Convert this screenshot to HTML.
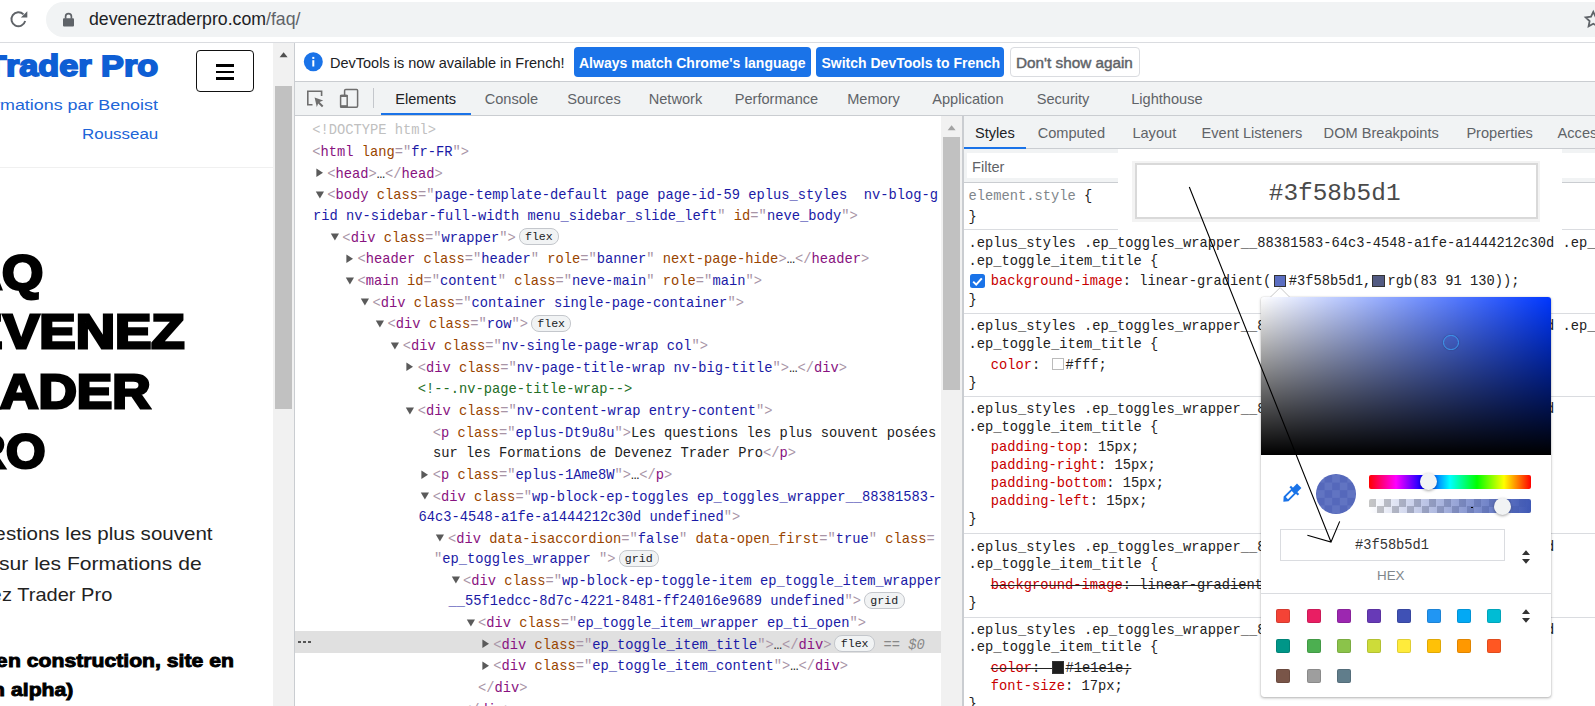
<!DOCTYPE html><html><head><meta charset="utf-8"><style>html,body{margin:0;padding:0;width:1595px;height:706px;overflow:hidden;background:#fff;position:relative}body>div,body>svg{box-sizing:content-box}</style></head><body><div style="position:absolute;left:0px;top:0px;width:1595px;height:42px;background:#fff"></div>
<div style="position:absolute;left:0px;top:42px;width:1595px;height:1px;background:#dadce0"></div>
<div style="position:absolute;left:46px;top:2px;width:1600px;height:35px;background:#f1f3f4;border-radius:17.5px"></div>
<svg style="position:absolute;left:0;top:0" width="40" height="40" viewBox="0 0 40 40">
<path d="M23.5 14.4 A7 7 0 1 0 25.2 21.1" fill="none" stroke="#5f6368" stroke-width="1.9"/>
<path d="M20.9 17.4 L27.3 17.4 L27.3 11.2 Z" fill="#5f6368"/>
</svg>
<svg style="position:absolute;left:62px;top:12px" width="13" height="16" viewBox="0 0 13 16">
<path d="M3.6 6.8 V4.6 A2.9 2.9 0 0 1 9.4 4.6 V6.8" fill="none" stroke="#5f6368" stroke-width="1.7"/>
<rect x="1" y="6.2" width="11" height="8.4" rx="1" fill="#5f6368"/>
</svg>
<div style="position:absolute;left:89px;top:4.47px;line-height:30px;font-family:'Liberation Sans', sans-serif;font-size:17.7px;color:#202124;font-weight:400;white-space:pre;"><span style="color:#202124">deveneztraderpro.com</span><span style="color:#5f6368">/faq/</span></div>
<svg style="position:absolute;left:0;top:0" width="1595" height="42" viewBox="0 0 1595 42"><path d="M1593.30 11.90 L1595.59 16.74 L1600.91 17.43 L1597.01 21.11 L1598.00 26.37 L1593.30 23.80 L1588.60 26.37 L1589.59 21.11 L1585.69 17.43 L1591.01 16.74 Z" fill="none" stroke="#5f6368" stroke-width="1.8" stroke-linejoin="miter"/></svg>
<div style="position:absolute;left:0px;top:43px;width:273px;height:663px;background:#fff"></div>
<div style="position:absolute;left:5.959848484848484px;top:50.51px;line-height:30px;font-family:'Liberation Sans', sans-serif;font-size:30px;color:#0e5ed4;font-weight:700;white-space:pre;transform:scaleX(1.1402);transform-origin:0 0;-webkit-text-stroke:1.8px #0e5ed4;">rader Pro</div>
<div style="position:absolute;right:1589.0401515151516px;top:50.51px;line-height:30px;font-family:'Liberation Sans', sans-serif;font-size:30px;color:#0e5ed4;font-weight:700;white-space:pre;transform:scaleX(1.1402);transform-origin:100% 0;-webkit-text-stroke:1.8px #0e5ed4;">T</div>
<div style="position:absolute;left:-0.3529411764705881px;top:89.53px;line-height:30px;font-family:'Liberation Sans', sans-serif;font-size:15.5px;color:#2065d8;font-weight:400;white-space:pre;transform:scaleX(1.1529);transform-origin:0 0;">mations par Benoist</div>
<div style="position:absolute;right:1595.3529411764705px;top:89.53px;line-height:30px;font-family:'Liberation Sans', sans-serif;font-size:15.5px;color:#2065d8;font-weight:400;white-space:pre;transform:scaleX(1.1529);transform-origin:100% 0;">for</div>
<div style="position:absolute;left:82.20735294117647px;top:118.83px;line-height:30px;font-family:'Liberation Sans', sans-serif;font-size:15.5px;color:#2065d8;font-weight:400;white-space:pre;transform:scaleX(1.0926);transform-origin:0 0;">Rousseau</div>
<div style="position:absolute;left:2.1px;top:257.87px;line-height:30px;font-family:'Liberation Sans', sans-serif;font-size:48px;color:#000;font-weight:700;white-space:pre;transform:scaleX(1.1027);transform-origin:0 0;-webkit-text-stroke:2.8px #000;">Q</div>
<div style="position:absolute;right:1592.9px;top:257.87px;line-height:30px;font-family:'Liberation Sans', sans-serif;font-size:48px;color:#000;font-weight:700;white-space:pre;transform:scaleX(1.1027);transform-origin:100% 0;-webkit-text-stroke:2.8px #000;">FA</div>
<div style="position:absolute;left:2.8347826086956522px;top:317.37px;line-height:30px;font-family:'Liberation Sans', sans-serif;font-size:48px;color:#000;font-weight:700;white-space:pre;transform:scaleX(1.1348);transform-origin:0 0;-webkit-text-stroke:2.8px #000;">VENEZ</div>
<div style="position:absolute;right:1592.1652173913044px;top:317.37px;line-height:30px;font-family:'Liberation Sans', sans-serif;font-size:48px;color:#000;font-weight:700;white-space:pre;transform:scaleX(1.1348);transform-origin:100% 0;-webkit-text-stroke:2.8px #000;">DE</div>
<div style="position:absolute;left:-0.3927536231884057px;top:377.17px;line-height:30px;font-family:'Liberation Sans', sans-serif;font-size:48px;color:#000;font-weight:700;white-space:pre;transform:scaleX(1.1072);transform-origin:0 0;-webkit-text-stroke:2.8px #000;">ADER</div>
<div style="position:absolute;right:1595.3927536231884px;top:377.17px;line-height:30px;font-family:'Liberation Sans', sans-serif;font-size:48px;color:#000;font-weight:700;white-space:pre;transform:scaleX(1.1072);transform-origin:100% 0;-webkit-text-stroke:2.8px #000;">TR</div>
<div style="position:absolute;left:5.5px;top:437.37px;line-height:30px;font-family:'Liberation Sans', sans-serif;font-size:48px;color:#000;font-weight:700;white-space:pre;transform:scaleX(1.0568);transform-origin:0 0;-webkit-text-stroke:2.8px #000;">O</div>
<div style="position:absolute;right:1589.5px;top:437.37px;line-height:30px;font-family:'Liberation Sans', sans-serif;font-size:48px;color:#000;font-weight:700;white-space:pre;transform:scaleX(1.0568);transform-origin:100% 0;-webkit-text-stroke:2.8px #000;">PR</div>
<div style="position:absolute;left:5.871428571428572px;top:519.19px;line-height:30px;font-family:'Liberation Sans', sans-serif;font-size:18.2px;color:#222;font-weight:400;white-space:pre;transform:scaleX(1.1286);transform-origin:0 0;">stions les plus souvent</div>
<div style="position:absolute;right:1589.1285714285714px;top:519.19px;line-height:30px;font-family:'Liberation Sans', sans-serif;font-size:18.2px;color:#222;font-weight:400;white-space:pre;transform:scaleX(1.1286);transform-origin:100% 0;">Les que</div>
<div style="position:absolute;left:-0.8589595375722543px;top:549.19px;line-height:30px;font-family:'Liberation Sans', sans-serif;font-size:18.2px;color:#222;font-weight:400;white-space:pre;transform:scaleX(1.1590);transform-origin:0 0;">sur les Formations de</div>
<div style="position:absolute;right:1595.8589595375722px;top:549.19px;line-height:30px;font-family:'Liberation Sans', sans-serif;font-size:18.2px;color:#222;font-weight:400;white-space:pre;transform:scaleX(1.1590);transform-origin:100% 0;">posées </div>
<div style="position:absolute;left:2.0979797979797983px;top:579.69px;line-height:30px;font-family:'Liberation Sans', sans-serif;font-size:18.2px;color:#222;font-weight:400;white-space:pre;transform:scaleX(1.1020);transform-origin:0 0;">z Trader Pro</div>
<div style="position:absolute;right:1592.9020202020201px;top:579.69px;line-height:30px;font-family:'Liberation Sans', sans-serif;font-size:18.2px;color:#222;font-weight:400;white-space:pre;transform:scaleX(1.1020);transform-origin:100% 0;">Devene</div>
<div style="position:absolute;left:7.75561224489796px;top:646.09px;line-height:30px;font-family:'Liberation Sans', sans-serif;font-size:18.5px;color:#000;font-weight:700;white-space:pre;transform:scaleX(1.1444);transform-origin:0 0;-webkit-text-stroke:0.9px #000;">n construction, site en</div>
<div style="position:absolute;right:1587.244387755102px;top:646.09px;line-height:30px;font-family:'Liberation Sans', sans-serif;font-size:18.5px;color:#000;font-weight:700;white-space:pre;transform:scaleX(1.1444);transform-origin:100% 0;-webkit-text-stroke:0.9px #000;">(Site e</div>
<div style="position:absolute;left:11.2px;top:675.09px;line-height:30px;font-family:'Liberation Sans', sans-serif;font-size:18.5px;color:#000;font-weight:700;white-space:pre;transform:scaleX(1.1426);transform-origin:0 0;-webkit-text-stroke:0.9px #000;">alpha)</div>
<div style="position:absolute;right:1583.8px;top:675.09px;line-height:30px;font-family:'Liberation Sans', sans-serif;font-size:18.5px;color:#000;font-weight:700;white-space:pre;transform:scaleX(1.1426);transform-origin:100% 0;-webkit-text-stroke:0.9px #000;">en </div>
<div style="position:absolute;left:196px;top:50px;width:56px;height:40px;border:1.3px solid #111;border-radius:4px;background:#fff"></div>
<div style="position:absolute;left:216px;top:64px;width:18px;height:2.8px;background:#000"></div>
<div style="position:absolute;left:216px;top:70.5px;width:18px;height:2.8px;background:#000"></div>
<div style="position:absolute;left:216px;top:77px;width:18px;height:2.8px;background:#000"></div>
<div style="position:absolute;left:0px;top:166.5px;width:273px;height:1px;background:#f0f0f0"></div>
<div style="position:absolute;left:273px;top:43px;width:21px;height:663px;background:#f1f1f1"></div>
<svg style="position:absolute;left:278px;top:50px" width="12" height="9" viewBox="0 0 12 9">
<path d="M1.6 7.2 L5.6 2.2 L9.6 7.2 Z" fill="#505050"/></svg>
<div style="position:absolute;left:275px;top:86px;width:17px;height:323px;background:#c1c1c1"></div>
<div style="position:absolute;left:294px;top:43px;width:1px;height:663px;background:#cacdd1"></div>
<div style="position:absolute;left:295px;top:43px;width:1300px;height:38px;background:#fff"></div>
<div style="position:absolute;left:295px;top:81px;width:1300px;height:1px;background:#cacdd1"></div>
<svg style="position:absolute;left:303px;top:52px" width="20" height="20" viewBox="0 0 20 20">
<circle cx="10.3" cy="9.7" r="9.5" fill="#1a73e8"/>
<rect x="9.3" y="8.2" width="2" height="6.3" fill="#fff"/>
<rect x="9.3" y="4.9" width="2" height="2" fill="#fff"/></svg>
<div style="position:absolute;left:330px;top:47.78px;line-height:30px;font-family:'Liberation Sans', sans-serif;font-size:14.5px;color:#202124;font-weight:400;white-space:pre;">DevTools is now available in French!</div>
<div style="position:absolute;left:574px;top:47px;width:237px;height:30px;background:#1a73e8;border-radius:4px"></div>
<div style="position:absolute;left:579px;top:47.65px;line-height:30px;font-family:'Liberation Sans', sans-serif;font-size:14px;color:#fff;font-weight:700;white-space:pre;">Always match Chrome&#x27;s language</div>
<div style="position:absolute;left:816px;top:47px;width:188px;height:30px;background:#1a73e8;border-radius:4px"></div>
<div style="position:absolute;left:821.5px;top:47.65px;line-height:30px;font-family:'Liberation Sans', sans-serif;font-size:14px;color:#fff;font-weight:700;white-space:pre;">Switch DevTools to French</div>
<div style="position:absolute;left:1009.5px;top:47px;width:128px;height:28px;background:#fff;border:1px solid #dadce0;border-radius:4px"></div>
<div style="position:absolute;left:1016px;top:47.50px;line-height:30px;font-family:'Liberation Sans', sans-serif;font-size:15.3px;color:#5f6368;font-weight:400;white-space:pre;-webkit-text-stroke:0.45px #5f6368">Don&#x27;t show again</div>
<div style="position:absolute;left:295px;top:82px;width:1300px;height:33px;background:#f1f3f4"></div>
<div style="position:absolute;left:295px;top:115px;width:1300px;height:1px;background:#cacdd1"></div>
<svg style="position:absolute;left:305px;top:88px" width="22" height="22" viewBox="0 0 22 22">
<path d="M7.5 16.8 H2.8 V3.2 H16.6 V8" fill="none" stroke="#6e6e6e" stroke-width="1.6"/>
<path d="M9.6 9.6 L18.2 12.6 L14.6 14 L18.4 17.8 L17 19.2 L13.2 15.4 L11.8 19 Z" fill="#6e6e6e"/></svg>
<svg style="position:absolute;left:337px;top:86px" width="24" height="24" viewBox="0 0 24 24">
<path d="M7.6 9 V4.6 Q7.6 3.4 8.8 3.4 H19.6 Q20.6 3.4 20.6 4.6 V20 Q20.6 21.2 19.4 21.2 H9.5" fill="none" stroke="#6e6e6e" stroke-width="1.5"/>
<rect x="3.6" y="9.4" width="6.6" height="11.2" rx="1" fill="none" stroke="#6e6e6e" stroke-width="1.5"/>
<rect x="2.9" y="19.3" width="8" height="2.6" rx="0.8" fill="#6e6e6e"/>
<rect x="2.9" y="8.7" width="8" height="2.4" rx="0.8" fill="#6e6e6e"/></svg>
<div style="position:absolute;left:372.5px;top:88px;width:1.2px;height:20px;background:#c4c7cc"></div>
<div style="position:absolute;left:395.2px;top:83.94px;line-height:30px;font-family:'Liberation Sans', sans-serif;font-size:14.6px;color:#202124;font-weight:400;white-space:pre;">Elements</div>
<div style="position:absolute;left:484.7px;top:83.94px;line-height:30px;font-family:'Liberation Sans', sans-serif;font-size:14.6px;color:#5f6368;font-weight:400;white-space:pre;">Console</div>
<div style="position:absolute;left:567.2px;top:83.94px;line-height:30px;font-family:'Liberation Sans', sans-serif;font-size:14.6px;color:#5f6368;font-weight:400;white-space:pre;">Sources</div>
<div style="position:absolute;left:648.7px;top:83.94px;line-height:30px;font-family:'Liberation Sans', sans-serif;font-size:14.6px;color:#5f6368;font-weight:400;white-space:pre;">Network</div>
<div style="position:absolute;left:734.7px;top:83.94px;line-height:30px;font-family:'Liberation Sans', sans-serif;font-size:14.6px;color:#5f6368;font-weight:400;white-space:pre;">Performance</div>
<div style="position:absolute;left:847.2px;top:83.94px;line-height:30px;font-family:'Liberation Sans', sans-serif;font-size:14.6px;color:#5f6368;font-weight:400;white-space:pre;">Memory</div>
<div style="position:absolute;left:932.2px;top:83.94px;line-height:30px;font-family:'Liberation Sans', sans-serif;font-size:14.6px;color:#5f6368;font-weight:400;white-space:pre;">Application</div>
<div style="position:absolute;left:1036.7px;top:83.94px;line-height:30px;font-family:'Liberation Sans', sans-serif;font-size:14.6px;color:#5f6368;font-weight:400;white-space:pre;">Security</div>
<div style="position:absolute;left:1131.2px;top:83.94px;line-height:30px;font-family:'Liberation Sans', sans-serif;font-size:14.6px;color:#5f6368;font-weight:400;white-space:pre;">Lighthouse</div>
<div style="position:absolute;left:381px;top:113px;width:89.5px;height:2px;background:#1a73e8"></div>
<div style="position:absolute;left:295px;top:116px;width:646px;height:590px;background:#fff"></div>
<div style="position:absolute;left:941px;top:116px;width:21px;height:590px;background:#f1f1f1"></div>
<svg style="position:absolute;left:946px;top:123px" width="12" height="9" viewBox="0 0 12 9">
<path d="M1.6 7.2 L5.6 2.2 L9.6 7.2 Z" fill="#a3a3a3"/></svg>
<div style="position:absolute;left:943px;top:137px;width:17px;height:253px;background:#c1c1c1"></div>
<div style="position:absolute;left:962px;top:116px;width:1.5px;height:590px;background:#cacdd1"></div>
<div style="position:absolute;left:312.2px;top:116.34px;line-height:30px;font-family:'Liberation Mono', monospace;font-size:13.75px;color:#202124;font-weight:400;white-space:pre;"><span style="color:#c0c0c0">&lt;!DOCTYPE html&gt;</span></div>
<div style="position:absolute;left:312.2px;top:138.04px;line-height:30px;font-family:'Liberation Mono', monospace;font-size:13.75px;color:#202124;font-weight:400;white-space:pre;"><span style="color:#a894a6">&lt;</span><span style="color:#881280">html </span><span style="color:#994500">lang</span><span style="color:#a894a6">=&quot;</span><span style="color:#1a1aa6">fr-FR</span><span style="color:#a894a6">&quot;&gt;</span></div>
<svg style="position:absolute;left:315.8px;top:168.4px" width="8" height="10" viewBox="0 0 8 10"><path d="M0.4 0.6 L7 4.8 L0.4 9 Z" fill="#5a5a5a"/></svg>
<div style="position:absolute;left:327.28px;top:159.74px;line-height:30px;font-family:'Liberation Mono', monospace;font-size:13.75px;color:#202124;font-weight:400;white-space:pre;"><span style="color:#a894a6">&lt;</span><span style="color:#881280">head</span><span style="color:#a894a6">&gt;</span><span style="color:#222">…</span><span style="color:#a894a6">&lt;/</span><span style="color:#881280">head</span><span style="color:#a894a6">&gt;</span></div>
<svg style="position:absolute;left:314.8px;top:191.1px" width="10" height="8" viewBox="0 0 10 8"><path d="M0.8 0.6 L9 0.6 L4.9 7.4 Z" fill="#5a5a5a"/></svg>
<div style="position:absolute;left:327.28px;top:181.44px;line-height:30px;font-family:'Liberation Mono', monospace;font-size:13.75px;color:#202124;font-weight:400;white-space:pre;"><span style="color:#a894a6">&lt;</span><span style="color:#881280">body </span><span style="color:#994500">class</span><span style="color:#a894a6">=&quot;</span><span style="color:#1a1aa6">page-template-default page page-id-59 eplus_styles  nv-blog-g</span></div>
<div style="position:absolute;left:313px;top:201.82px;line-height:30px;font-family:'Liberation Mono', monospace;font-size:13.75px;color:#202124;font-weight:400;white-space:pre;"><span style="color:#1a1aa6">rid nv-sidebar-full-width menu_sidebar_slide_left</span><span style="color:#a894a6">&quot;</span><span style="color:#994500"> id</span><span style="color:#a894a6">=&quot;</span><span style="color:#1a1aa6">neve_body</span><span style="color:#a894a6">&quot;&gt;</span></div>
<svg style="position:absolute;left:329.9px;top:233.2px" width="10" height="8" viewBox="0 0 10 8"><path d="M0.8 0.6 L9 0.6 L4.9 7.4 Z" fill="#5a5a5a"/></svg>
<div style="position:absolute;left:342.36px;top:223.52px;line-height:30px;font-family:'Liberation Mono', monospace;font-size:13.75px;color:#202124;font-weight:400;white-space:pre;"><span style="color:#a894a6">&lt;</span><span style="color:#881280">div </span><span style="color:#994500">class</span><span style="color:#a894a6">=&quot;</span><span style="color:#1a1aa6">wrapper</span><span style="color:#a894a6">&quot;&gt;</span></div>
<div style="position:absolute;left:518.6px;top:228.4px;width:38.5px;height:15px;border:1px solid #c4c7cc;border-radius:8px;background:#f1f3f4;font-family:'Liberation Mono', monospace;font-size:11.6px;line-height:15px;text-align:center;color:#202124">flex</div>
<svg style="position:absolute;left:345.9px;top:253.9px" width="8" height="10" viewBox="0 0 8 10"><path d="M0.4 0.6 L7 4.8 L0.4 9 Z" fill="#5a5a5a"/></svg>
<div style="position:absolute;left:357.44px;top:245.22px;line-height:30px;font-family:'Liberation Mono', monospace;font-size:13.75px;color:#202124;font-weight:400;white-space:pre;"><span style="color:#a894a6">&lt;</span><span style="color:#881280">header </span><span style="color:#994500">class</span><span style="color:#a894a6">=&quot;</span><span style="color:#1a1aa6">header</span><span style="color:#a894a6">&quot;</span><span style="color:#994500"> role</span><span style="color:#a894a6">=&quot;</span><span style="color:#1a1aa6">banner</span><span style="color:#a894a6">&quot;</span><span style="color:#994500"> next-page-hide</span><span style="color:#a894a6">&gt;</span><span style="color:#222">…</span><span style="color:#a894a6">&lt;/</span><span style="color:#881280">header</span><span style="color:#a894a6">&gt;</span></div>
<svg style="position:absolute;left:344.9px;top:276.6px" width="10" height="8" viewBox="0 0 10 8"><path d="M0.8 0.6 L9 0.6 L4.9 7.4 Z" fill="#5a5a5a"/></svg>
<div style="position:absolute;left:357.44px;top:266.92px;line-height:30px;font-family:'Liberation Mono', monospace;font-size:13.75px;color:#202124;font-weight:400;white-space:pre;"><span style="color:#a894a6">&lt;</span><span style="color:#881280">main </span><span style="color:#994500">id</span><span style="color:#a894a6">=&quot;</span><span style="color:#1a1aa6">content</span><span style="color:#a894a6">&quot;</span><span style="color:#994500"> class</span><span style="color:#a894a6">=&quot;</span><span style="color:#1a1aa6">neve-main</span><span style="color:#a894a6">&quot;</span><span style="color:#994500"> role</span><span style="color:#a894a6">=&quot;</span><span style="color:#1a1aa6">main</span><span style="color:#a894a6">&quot;&gt;</span></div>
<svg style="position:absolute;left:360.0px;top:298.3px" width="10" height="8" viewBox="0 0 10 8"><path d="M0.8 0.6 L9 0.6 L4.9 7.4 Z" fill="#5a5a5a"/></svg>
<div style="position:absolute;left:372.52px;top:288.62px;line-height:30px;font-family:'Liberation Mono', monospace;font-size:13.75px;color:#202124;font-weight:400;white-space:pre;"><span style="color:#a894a6">&lt;</span><span style="color:#881280">div </span><span style="color:#994500">class</span><span style="color:#a894a6">=&quot;</span><span style="color:#1a1aa6">container single-page-container</span><span style="color:#a894a6">&quot;&gt;</span></div>
<svg style="position:absolute;left:375.1px;top:320.0px" width="10" height="8" viewBox="0 0 10 8"><path d="M0.8 0.6 L9 0.6 L4.9 7.4 Z" fill="#5a5a5a"/></svg>
<div style="position:absolute;left:387.6px;top:310.32px;line-height:30px;font-family:'Liberation Mono', monospace;font-size:13.75px;color:#202124;font-weight:400;white-space:pre;"><span style="color:#a894a6">&lt;</span><span style="color:#881280">div </span><span style="color:#994500">class</span><span style="color:#a894a6">=&quot;</span><span style="color:#1a1aa6">row</span><span style="color:#a894a6">&quot;&gt;</span></div>
<div style="position:absolute;left:530.9px;top:315.2px;width:38.5px;height:15px;border:1px solid #c4c7cc;border-radius:8px;background:#f1f3f4;font-family:'Liberation Mono', monospace;font-size:11.6px;line-height:15px;text-align:center;color:#202124">flex</div>
<svg style="position:absolute;left:390.2px;top:341.7px" width="10" height="8" viewBox="0 0 10 8"><path d="M0.8 0.6 L9 0.6 L4.9 7.4 Z" fill="#5a5a5a"/></svg>
<div style="position:absolute;left:402.68px;top:332.02px;line-height:30px;font-family:'Liberation Mono', monospace;font-size:13.75px;color:#202124;font-weight:400;white-space:pre;"><span style="color:#a894a6">&lt;</span><span style="color:#881280">div </span><span style="color:#994500">class</span><span style="color:#a894a6">=&quot;</span><span style="color:#1a1aa6">nv-single-page-wrap col</span><span style="color:#a894a6">&quot;&gt;</span></div>
<svg style="position:absolute;left:406.3px;top:362.4px" width="8" height="10" viewBox="0 0 8 10"><path d="M0.4 0.6 L7 4.8 L0.4 9 Z" fill="#5a5a5a"/></svg>
<div style="position:absolute;left:417.76px;top:353.72px;line-height:30px;font-family:'Liberation Mono', monospace;font-size:13.75px;color:#202124;font-weight:400;white-space:pre;"><span style="color:#a894a6">&lt;</span><span style="color:#881280">div </span><span style="color:#994500">class</span><span style="color:#a894a6">=&quot;</span><span style="color:#1a1aa6">nv-page-title-wrap nv-big-title</span><span style="color:#a894a6">&quot;&gt;</span><span style="color:#222">…</span><span style="color:#a894a6">&lt;/</span><span style="color:#881280">div</span><span style="color:#a894a6">&gt;</span></div>
<div style="position:absolute;left:417.76px;top:375.42px;line-height:30px;font-family:'Liberation Mono', monospace;font-size:13.75px;color:#202124;font-weight:400;white-space:pre;"><span style="color:#236e25">&lt;!--.nv-page-title-wrap--&gt;</span></div>
<svg style="position:absolute;left:405.3px;top:406.8px" width="10" height="8" viewBox="0 0 10 8"><path d="M0.8 0.6 L9 0.6 L4.9 7.4 Z" fill="#5a5a5a"/></svg>
<div style="position:absolute;left:417.76px;top:397.12px;line-height:30px;font-family:'Liberation Mono', monospace;font-size:13.75px;color:#202124;font-weight:400;white-space:pre;"><span style="color:#a894a6">&lt;</span><span style="color:#881280">div </span><span style="color:#994500">class</span><span style="color:#a894a6">=&quot;</span><span style="color:#1a1aa6">nv-content-wrap entry-content</span><span style="color:#a894a6">&quot;&gt;</span></div>
<div style="position:absolute;left:432.84px;top:418.82px;line-height:30px;font-family:'Liberation Mono', monospace;font-size:13.75px;color:#202124;font-weight:400;white-space:pre;"><span style="color:#a894a6">&lt;</span><span style="color:#881280">p </span><span style="color:#994500">class</span><span style="color:#a894a6">=&quot;</span><span style="color:#1a1aa6">eplus-Dt9u8u</span><span style="color:#a894a6">&quot;&gt;</span><span style="color:#222">Les questions les plus souvent posées</span></div>
<div style="position:absolute;left:433px;top:439.20px;line-height:30px;font-family:'Liberation Mono', monospace;font-size:13.75px;color:#202124;font-weight:400;white-space:pre;"><span style="color:#222">sur les Formations de Devenez Trader Pro</span><span style="color:#a894a6">&lt;/</span><span style="color:#881280">p</span><span style="color:#a894a6">&gt;</span></div>
<svg style="position:absolute;left:421.3px;top:469.6px" width="8" height="10" viewBox="0 0 8 10"><path d="M0.4 0.6 L7 4.8 L0.4 9 Z" fill="#5a5a5a"/></svg>
<div style="position:absolute;left:432.84px;top:460.90px;line-height:30px;font-family:'Liberation Mono', monospace;font-size:13.75px;color:#202124;font-weight:400;white-space:pre;"><span style="color:#a894a6">&lt;</span><span style="color:#881280">p </span><span style="color:#994500">class</span><span style="color:#a894a6">=&quot;</span><span style="color:#1a1aa6">eplus-1Ame8W</span><span style="color:#a894a6">&quot;&gt;</span><span style="color:#222">…</span><span style="color:#a894a6">&lt;/</span><span style="color:#881280">p</span><span style="color:#a894a6">&gt;</span></div>
<svg style="position:absolute;left:420.3px;top:492.3px" width="10" height="8" viewBox="0 0 10 8"><path d="M0.8 0.6 L9 0.6 L4.9 7.4 Z" fill="#5a5a5a"/></svg>
<div style="position:absolute;left:432.84px;top:482.60px;line-height:30px;font-family:'Liberation Mono', monospace;font-size:13.75px;color:#202124;font-weight:400;white-space:pre;"><span style="color:#a894a6">&lt;</span><span style="color:#881280">div </span><span style="color:#994500">class</span><span style="color:#a894a6">=&quot;</span><span style="color:#1a1aa6">wp-block-ep-toggles ep_toggles_wrapper__88381583-</span></div>
<div style="position:absolute;left:418.5px;top:502.98px;line-height:30px;font-family:'Liberation Mono', monospace;font-size:13.75px;color:#202124;font-weight:400;white-space:pre;"><span style="color:#1a1aa6">64c3-4548-a1fe-a1444212c30d undefined</span><span style="color:#a894a6">&quot;&gt;</span></div>
<svg style="position:absolute;left:435.4px;top:534.3px" width="10" height="8" viewBox="0 0 10 8"><path d="M0.8 0.6 L9 0.6 L4.9 7.4 Z" fill="#5a5a5a"/></svg>
<div style="position:absolute;left:447.91999999999996px;top:524.68px;line-height:30px;font-family:'Liberation Mono', monospace;font-size:13.75px;color:#202124;font-weight:400;white-space:pre;"><span style="color:#a894a6">&lt;</span><span style="color:#881280">div </span><span style="color:#994500">data-isaccordion</span><span style="color:#a894a6">=&quot;</span><span style="color:#1a1aa6">false</span><span style="color:#a894a6">&quot;</span><span style="color:#994500"> data-open_first</span><span style="color:#a894a6">=&quot;</span><span style="color:#1a1aa6">true</span><span style="color:#a894a6">&quot;</span><span style="color:#994500"> class</span><span style="color:#a894a6">=</span></div>
<div style="position:absolute;left:434px;top:545.06px;line-height:30px;font-family:'Liberation Mono', monospace;font-size:13.75px;color:#202124;font-weight:400;white-space:pre;"><span style="color:#a894a6">&quot;</span><span style="color:#1a1aa6">ep_toggles_wrapper </span><span style="color:#a894a6">&quot;&gt;</span></div>
<div style="position:absolute;left:618.5px;top:549.9px;width:38.5px;height:15px;border:1px solid #c4c7cc;border-radius:8px;background:#f1f3f4;font-family:'Liberation Mono', monospace;font-size:11.6px;line-height:15px;text-align:center;color:#202124">grid</div>
<svg style="position:absolute;left:450.5px;top:576.4px" width="10" height="8" viewBox="0 0 10 8"><path d="M0.8 0.6 L9 0.6 L4.9 7.4 Z" fill="#5a5a5a"/></svg>
<div style="position:absolute;left:463.0px;top:566.76px;line-height:30px;font-family:'Liberation Mono', monospace;font-size:13.75px;color:#202124;font-weight:400;white-space:pre;"><span style="color:#a894a6">&lt;</span><span style="color:#881280">div </span><span style="color:#994500">class</span><span style="color:#a894a6">=&quot;</span><span style="color:#1a1aa6">wp-block-ep-toggle-item ep_toggle_item_wrapper</span></div>
<div style="position:absolute;left:448.5px;top:587.14px;line-height:30px;font-family:'Liberation Mono', monospace;font-size:13.75px;color:#202124;font-weight:400;white-space:pre;"><span style="color:#1a1aa6">__55f1edcc-8d7c-4221-8481-ff24016e9689 undefined</span><span style="color:#a894a6">&quot;&gt;</span></div>
<div style="position:absolute;left:864.0px;top:592.0px;width:38.5px;height:15px;border:1px solid #c4c7cc;border-radius:8px;background:#f1f3f4;font-family:'Liberation Mono', monospace;font-size:11.6px;line-height:15px;text-align:center;color:#202124">grid</div>
<svg style="position:absolute;left:465.6px;top:618.5px" width="10" height="8" viewBox="0 0 10 8"><path d="M0.8 0.6 L9 0.6 L4.9 7.4 Z" fill="#5a5a5a"/></svg>
<div style="position:absolute;left:478.08px;top:608.84px;line-height:30px;font-family:'Liberation Mono', monospace;font-size:13.75px;color:#202124;font-weight:400;white-space:pre;"><span style="color:#a894a6">&lt;</span><span style="color:#881280">div </span><span style="color:#994500">class</span><span style="color:#a894a6">=&quot;</span><span style="color:#1a1aa6">ep_toggle_item_wrapper ep_ti_open</span><span style="color:#a894a6">&quot;&gt;</span></div>
<div style="position:absolute;left:295px;top:631px;width:646px;height:22px;background:#e0e0e0"></div>
<div style="position:absolute;left:297.5px;top:640.6px;width:14px;height:3px"><div style="position:absolute;left:0px;top:0;width:3px;height:2.6px;background:#555"></div><div style="position:absolute;left:5px;top:0;width:3px;height:2.6px;background:#555"></div><div style="position:absolute;left:10px;top:0;width:3px;height:2.6px;background:#555"></div></div>
<svg style="position:absolute;left:481.7px;top:639.2px" width="8" height="10" viewBox="0 0 8 10"><path d="M0.4 0.6 L7 4.8 L0.4 9 Z" fill="#5a5a5a"/></svg>
<div style="position:absolute;left:493.15999999999997px;top:630.54px;line-height:30px;font-family:'Liberation Mono', monospace;font-size:13.75px;color:#202124;font-weight:400;white-space:pre;"><span style="color:#a894a6">&lt;</span><span style="color:#881280">div </span><span style="color:#994500">class</span><span style="color:#a894a6">=&quot;</span><span style="color:#1a1aa6">ep_toggle_item_title</span><span style="color:#a894a6">&quot;&gt;</span><span style="color:#222">…</span><span style="color:#a894a6">&lt;/</span><span style="color:#881280">div</span><span style="color:#a894a6">&gt;</span></div>
<div style="position:absolute;left:834.4px;top:635.4px;width:38.5px;height:15px;border:1px solid #c4c7cc;border-radius:8px;background:#f1f3f4;font-family:'Liberation Mono', monospace;font-size:11.6px;line-height:15px;text-align:center;color:#202124">flex</div>
<div style="position:absolute;left:883.41px;top:630.54px;line-height:30px;font-family:'Liberation Mono', monospace;font-size:13.75px;color:#888;font-weight:400;white-space:pre;font-style:italic">== $0</div>
<svg style="position:absolute;left:481.7px;top:660.9px" width="8" height="10" viewBox="0 0 8 10"><path d="M0.4 0.6 L7 4.8 L0.4 9 Z" fill="#5a5a5a"/></svg>
<div style="position:absolute;left:493.15999999999997px;top:652.24px;line-height:30px;font-family:'Liberation Mono', monospace;font-size:13.75px;color:#202124;font-weight:400;white-space:pre;"><span style="color:#a894a6">&lt;</span><span style="color:#881280">div </span><span style="color:#994500">class</span><span style="color:#a894a6">=&quot;</span><span style="color:#1a1aa6">ep_toggle_item_content</span><span style="color:#a894a6">&quot;&gt;</span><span style="color:#222">…</span><span style="color:#a894a6">&lt;/</span><span style="color:#881280">div</span><span style="color:#a894a6">&gt;</span></div>
<div style="position:absolute;left:478.08px;top:673.94px;line-height:30px;font-family:'Liberation Mono', monospace;font-size:13.75px;color:#202124;font-weight:400;white-space:pre;"><span style="color:#a894a6">&lt;/</span><span style="color:#881280">div</span><span style="color:#a894a6">&gt;</span></div>
<div style="position:absolute;left:463.0px;top:695.64px;line-height:30px;font-family:'Liberation Mono', monospace;font-size:13.75px;color:#202124;font-weight:400;white-space:pre;"><span style="color:#a894a6">&lt;/</span><span style="color:#881280">div</span><span style="color:#a894a6">&gt;</span></div>
<div style="position:absolute;left:963.5px;top:116px;width:631.5px;height:33px;background:#f1f3f4"></div>
<div style="position:absolute;left:963.5px;top:148px;width:631.5px;height:1px;background:#cacdd1"></div>
<div style="position:absolute;left:975.0px;top:117.84px;line-height:30px;font-family:'Liberation Sans', sans-serif;font-size:14.6px;color:#202124;font-weight:400;white-space:pre;">Styles</div>
<div style="position:absolute;left:1037.7px;top:117.84px;line-height:30px;font-family:'Liberation Sans', sans-serif;font-size:14.6px;color:#5f6368;font-weight:400;white-space:pre;">Computed</div>
<div style="position:absolute;left:1132.4px;top:117.84px;line-height:30px;font-family:'Liberation Sans', sans-serif;font-size:14.6px;color:#5f6368;font-weight:400;white-space:pre;">Layout</div>
<div style="position:absolute;left:1201.6000000000001px;top:117.84px;line-height:30px;font-family:'Liberation Sans', sans-serif;font-size:14.6px;color:#5f6368;font-weight:400;white-space:pre;">Event Listeners</div>
<div style="position:absolute;left:1323.6000000000001px;top:117.84px;line-height:30px;font-family:'Liberation Sans', sans-serif;font-size:14.6px;color:#5f6368;font-weight:400;white-space:pre;">DOM Breakpoints</div>
<div style="position:absolute;left:1466.4px;top:117.84px;line-height:30px;font-family:'Liberation Sans', sans-serif;font-size:14.6px;color:#5f6368;font-weight:400;white-space:pre;">Properties</div>
<div style="position:absolute;left:1557.6000000000001px;top:117.84px;line-height:30px;font-family:'Liberation Sans', sans-serif;font-size:14.6px;color:#5f6368;font-weight:400;white-space:pre;">Accessibility</div>
<div style="position:absolute;left:964px;top:147px;width:62.2px;height:2px;background:#1a73e8"></div>
<div style="position:absolute;left:963.5px;top:149px;width:631.5px;height:33px;background:#f1f3f4"></div>
<div style="position:absolute;left:963.5px;top:182px;width:631.5px;height:1px;background:#cacdd1"></div>
<div style="position:absolute;left:966.7px;top:153px;width:640px;height:25px;background:#fff"></div>
<div style="position:absolute;left:972px;top:151.94px;line-height:30px;font-family:'Liberation Sans', sans-serif;font-size:14.6px;color:#5f6368;font-weight:400;white-space:pre;">Filter</div>
<div style="position:absolute;left:963.5px;top:183px;width:631.5px;height:523px;background:#fff"></div>
<div style="position:absolute;left:968.4px;top:181.94px;line-height:30px;font-family:'Liberation Mono', monospace;font-size:13.75px;color:#222;font-weight:400;white-space:pre;"><span style="color:#80868b">element.style</span> {</div>
<div style="position:absolute;left:968.4px;top:202.84px;line-height:30px;font-family:'Liberation Mono', monospace;font-size:13.75px;color:#222;font-weight:400;white-space:pre;">}</div>
<div style="position:absolute;left:963.5px;top:229px;width:631.5px;height:1px;background:#dadce0"></div>
<div style="position:absolute;left:968.4px;top:229.14px;line-height:30px;font-family:'Liberation Mono', monospace;font-size:13.75px;color:#222;font-weight:400;white-space:pre;">.eplus_styles .ep_toggles_wrapper__88381583-64c3-4548-a1fe-a1444212c30d .ep_toggle_item_wrapper</div>
<div style="position:absolute;left:968.4px;top:247.04px;line-height:30px;font-family:'Liberation Mono', monospace;font-size:13.75px;color:#222;font-weight:400;white-space:pre;">.ep_toggle_item_title {</div>
<div style="position:absolute;left:969.6px;top:273.8px;width:15px;height:14.5px;background:#1a73e8;border-radius:2.5px"></div>
<svg style="position:absolute;left:969.6px;top:273.8px" width="15" height="15" viewBox="0 0 15 15"><path d="M3.2 7.6 L6.2 10.6 L11.8 4.4" fill="none" stroke="#fff" stroke-width="2"/></svg>
<div style="position:absolute;left:990.6999999999999px;top:267.44px;line-height:30px;font-family:'Liberation Mono', monospace;font-size:13.75px;color:#222;font-weight:400;white-space:pre;"><span style="color:#c80000">background-image</span>: linear-gradient(</div>
<div style="position:absolute;left:1274px;top:274.7px;width:10px;height:10.7px;border:1px solid #333;background:#5b6ec1"></div>
<div style="position:absolute;left:1288.7px;top:267.44px;line-height:30px;font-family:'Liberation Mono', monospace;font-size:13.75px;color:#222;font-weight:400;white-space:pre;">#3f58b5d1,</div>
<div style="position:absolute;left:1372.2px;top:274.7px;width:10.5px;height:10.7px;border:1px solid #333;background:#535b82"></div>
<div style="position:absolute;left:1387.4px;top:267.44px;line-height:30px;font-family:'Liberation Mono', monospace;font-size:13.75px;color:#222;font-weight:400;white-space:pre;">rgb(83 91 130));</div>
<div style="position:absolute;left:968.4px;top:286.04px;line-height:30px;font-family:'Liberation Mono', monospace;font-size:13.75px;color:#222;font-weight:400;white-space:pre;">}</div>
<div style="position:absolute;left:963.5px;top:313px;width:631.5px;height:1px;background:#dadce0"></div>
<div style="position:absolute;left:968.4px;top:312.24px;line-height:30px;font-family:'Liberation Mono', monospace;font-size:13.75px;color:#222;font-weight:400;white-space:pre;">.eplus_styles .ep_toggles_wrapper__88381583-64c3-4548-a1fe-a1444212c30d .ep_toggle_item_wrapper</div>
<div style="position:absolute;left:968.4px;top:330.14px;line-height:30px;font-family:'Liberation Mono', monospace;font-size:13.75px;color:#222;font-weight:400;white-space:pre;">.ep_toggle_item_title {</div>
<div style="position:absolute;left:990.6999999999999px;top:350.54px;line-height:30px;font-family:'Liberation Mono', monospace;font-size:13.75px;color:#222;font-weight:400;white-space:pre;"><span style="color:#c80000">color</span>:</div>
<div style="position:absolute;left:1051.5px;top:357.8px;width:10px;height:10.7px;border:1px solid #bbb;background:#fff"></div>
<div style="position:absolute;left:1065.4px;top:350.54px;line-height:30px;font-family:'Liberation Mono', monospace;font-size:13.75px;color:#222;font-weight:400;white-space:pre;">#fff;</div>
<div style="position:absolute;left:968.4px;top:369.14px;line-height:30px;font-family:'Liberation Mono', monospace;font-size:13.75px;color:#222;font-weight:400;white-space:pre;">}</div>
<div style="position:absolute;left:963.5px;top:396px;width:631.5px;height:1px;background:#dadce0"></div>
<div style="position:absolute;left:968.4px;top:394.74px;line-height:30px;font-family:'Liberation Mono', monospace;font-size:13.75px;color:#222;font-weight:400;white-space:pre;">.eplus_styles .ep_toggles_wrapper__88381583-64c3-4548-a1fe-a1444212c30d</div>
<div style="position:absolute;left:968.4px;top:412.64px;line-height:30px;font-family:'Liberation Mono', monospace;font-size:13.75px;color:#222;font-weight:400;white-space:pre;">.ep_toggle_item_title {</div>
<div style="position:absolute;left:990.6999999999999px;top:433.04px;line-height:30px;font-family:'Liberation Mono', monospace;font-size:13.75px;color:#222;font-weight:400;white-space:pre;"><span style="color:#c80000">padding-top</span>: 15px;</div>
<div style="position:absolute;left:990.6999999999999px;top:450.94px;line-height:30px;font-family:'Liberation Mono', monospace;font-size:13.75px;color:#222;font-weight:400;white-space:pre;"><span style="color:#c80000">padding-right</span>: 15px;</div>
<div style="position:absolute;left:990.6999999999999px;top:468.84px;line-height:30px;font-family:'Liberation Mono', monospace;font-size:13.75px;color:#222;font-weight:400;white-space:pre;"><span style="color:#c80000">padding-bottom</span>: 15px;</div>
<div style="position:absolute;left:990.6999999999999px;top:486.74px;line-height:30px;font-family:'Liberation Mono', monospace;font-size:13.75px;color:#222;font-weight:400;white-space:pre;"><span style="color:#c80000">padding-left</span>: 15px;</div>
<div style="position:absolute;left:968.4px;top:505.34px;line-height:30px;font-family:'Liberation Mono', monospace;font-size:13.75px;color:#222;font-weight:400;white-space:pre;">}</div>
<div style="position:absolute;left:963.5px;top:533px;width:631.5px;height:1px;background:#dadce0"></div>
<div style="position:absolute;left:968.4px;top:532.54px;line-height:30px;font-family:'Liberation Mono', monospace;font-size:13.75px;color:#222;font-weight:400;white-space:pre;">.eplus_styles .ep_toggles_wrapper__88381583-64c3-4548-a1fe-a1444212c30d</div>
<div style="position:absolute;left:968.4px;top:550.44px;line-height:30px;font-family:'Liberation Mono', monospace;font-size:13.75px;color:#222;font-weight:400;white-space:pre;">.ep_toggle_item_title {</div>
<div style="position:absolute;left:990.6999999999999px;top:570.84px;line-height:30px;font-family:'Liberation Mono', monospace;font-size:13.75px;color:#222;font-weight:400;white-space:pre;text-decoration:line-through;text-decoration-color:#222"><span style="color:#c80000">background-image</span>: linear-gradient(rgb(63 88 181 / 82%), rgb(83</div>
<div style="position:absolute;left:968.4px;top:589.44px;line-height:30px;font-family:'Liberation Mono', monospace;font-size:13.75px;color:#222;font-weight:400;white-space:pre;">}</div>
<div style="position:absolute;left:963.5px;top:617px;width:631.5px;height:1px;background:#dadce0"></div>
<div style="position:absolute;left:968.4px;top:615.54px;line-height:30px;font-family:'Liberation Mono', monospace;font-size:13.75px;color:#222;font-weight:400;white-space:pre;">.eplus_styles .ep_toggles_wrapper__88381583-64c3-4548-a1fe-a1444212c30d</div>
<div style="position:absolute;left:968.4px;top:633.44px;line-height:30px;font-family:'Liberation Mono', monospace;font-size:13.75px;color:#222;font-weight:400;white-space:pre;">.ep_toggle_item_title {</div>
<div style="position:absolute;left:990.6999999999999px;top:653.84px;line-height:30px;font-family:'Liberation Mono', monospace;font-size:13.75px;color:#222;font-weight:400;white-space:pre;text-decoration:line-through;text-decoration-color:#222"><span style="color:#c80000">color</span>:  </div>
<div style="position:absolute;left:1051.5px;top:661.1px;width:10px;height:10.7px;border:1px solid #333;background:#1e1e1e"></div>
<div style="position:absolute;left:1065.4px;top:653.84px;line-height:30px;font-family:'Liberation Mono', monospace;font-size:13.75px;color:#222;font-weight:400;white-space:pre;text-decoration:line-through">#1e1e1e;</div>
<div style="position:absolute;left:990.6999999999999px;top:671.74px;line-height:30px;font-family:'Liberation Mono', monospace;font-size:13.75px;color:#222;font-weight:400;white-space:pre;"><span style="color:#c80000">font-size</span>: 17px;</div>
<div style="position:absolute;left:968.4px;top:690.34px;line-height:30px;font-family:'Liberation Mono', monospace;font-size:13.75px;color:#222;font-weight:400;white-space:pre;">}</div>
<div style="position:absolute;left:1118px;top:149px;width:444.4px;height:81px;background:#fff"></div>
<div style="position:absolute;left:1132.3px;top:161.2px;width:407.7px;height:60.7px;background:#f3f3f3"></div>
<div style="position:absolute;left:1134.5px;top:163.4px;width:403.7px;height:55.2px;background:#fff;border:2px solid #d9d9d9;box-sizing:border-box"></div>
<div style="position:absolute;left:1268.8px;top:178.51px;line-height:30px;font-family:'Liberation Mono', monospace;font-size:24.4px;color:#4a4a4a;font-weight:400;white-space:pre;">#3f58b5d1</div>
<div style="position:absolute;left:1261px;top:297px;width:290px;height:400px;background:#fff;border-radius:3px;box-shadow:0 1px 3px rgba(0,0,0,0.3),0 0 1px rgba(0,0,0,0.25)"></div>
<svg style="position:absolute;left:1268px;top:286px" width="25" height="13" viewBox="0 0 25 13"><path d="M2 11.5 L12.2 1.6 L22 11.5" fill="#fff" stroke="#c8c8c8" stroke-width="1"/><rect x="0" y="11" width="25" height="2" fill="#fff"/></svg>
<div style="position:absolute;left:1261px;top:297px;width:290px;height:157.5px;border-radius:3px 3px 0 0;background:linear-gradient(to top,#000,rgba(0,0,0,0)),linear-gradient(to right,#fff,rgba(255,255,255,0)),hsl(227deg,100%,50%)"></div>
<div style="position:absolute;left:1443px;top:334.7px;width:13.5px;height:13.5px;border:1.2px solid #3c9cf0;border-radius:50%;box-shadow:0 0 1.5px rgba(0,0,0,0.4)"></div>
<svg style="position:absolute;left:1276.5px;top:480px" width="28" height="28" viewBox="0 0 28 28">
<g transform="rotate(45 14 14)" fill="#1a73e8">
<rect x="10.9" y="2.4" width="6.2" height="6.6"/>
<rect x="8.2" y="8.2" width="11.6" height="2.2"/>
<path d="M10.6 9.6 H17.4 V21 L14 24.8 L10.6 21 Z M12.5 11.4 V19.8 H15.5 V11.4 Z" fill-rule="evenodd"/>
</g></svg>
<div style="position:absolute;left:1316px;top:474px;width:40px;height:40px;border-radius:50%;overflow:hidden;background:repeating-conic-gradient(#5568bb 0% 25%,#6174c2 0% 50%) 1px 1px/15.2px 15.2px"></div>
<div style="position:absolute;left:1369px;top:475px;width:162px;height:14px;border-radius:2px;background:linear-gradient(to right,#f00,#f0f,#00f,#0ff,#0f0,#ff0,#f00)"></div>
<div style="position:absolute;left:1420px;top:473.3px;width:17px;height:17px;border-radius:50%;background:#f1f3f4;box-shadow:0 1px 3px rgba(0,0,0,0.35)"></div>
<div style="position:absolute;left:1369px;top:499px;width:162px;height:14px;border-radius:2px;overflow:hidden;background:repeating-conic-gradient(#fff 0% 25%,#c6c6c6 0% 50%) 0 0/15px 15px"><div style="position:absolute;left:0;top:0;right:0;bottom:0;background:linear-gradient(to right,rgba(63,88,181,0),rgb(63,88,181))"></div></div>
<div style="position:absolute;left:1493.5px;top:497.5px;width:17px;height:17px;border-radius:50%;background:#f1f3f4;box-shadow:0 1px 3px rgba(0,0,0,0.35)"></div>
<div style="position:absolute;left:1471px;top:506.5px;width:2.2px;height:1.6px;background:#000"></div>
<div style="position:absolute;left:1280px;top:529px;width:224.6px;height:31.6px;border:1px solid #dadce0;box-sizing:border-box;background:#fff"></div>
<div style="position:absolute;left:1392px;top:531.05px;line-height:30px;font-family:'Liberation Mono', monospace;font-size:13.733px;color:#333;font-weight:400;white-space:pre;transform:translateX(-50%)">#3f58b5d1</div>
<div style="position:absolute;left:1377px;top:560.96px;line-height:30px;font-family:'Liberation Sans', sans-serif;font-size:13.4px;color:#80868b;font-weight:400;white-space:pre;">HEX</div>
<svg style="position:absolute;left:1519.7px;top:548px" width="12" height="18" viewBox="0 0 12 18"><path d="M2 7 L6 2.2 L10 7 Z M2 11 L6 15.8 L10 11 Z" fill="#333"/></svg>
<div style="position:absolute;left:1261px;top:593px;width:290px;height:1px;background:#dadce0"></div>
<div style="position:absolute;left:1276.4px;top:609.0px;width:14px;height:14px;border-radius:2px;background:#f44336;box-shadow:inset 0 0 0 1px rgba(0,0,0,0.12)"></div>
<div style="position:absolute;left:1306.5px;top:609.0px;width:14px;height:14px;border-radius:2px;background:#e91e63;box-shadow:inset 0 0 0 1px rgba(0,0,0,0.12)"></div>
<div style="position:absolute;left:1336.5px;top:609.0px;width:14px;height:14px;border-radius:2px;background:#9c27b0;box-shadow:inset 0 0 0 1px rgba(0,0,0,0.12)"></div>
<div style="position:absolute;left:1366.6px;top:609.0px;width:14px;height:14px;border-radius:2px;background:#673ab7;box-shadow:inset 0 0 0 1px rgba(0,0,0,0.12)"></div>
<div style="position:absolute;left:1396.6px;top:609.0px;width:14px;height:14px;border-radius:2px;background:#3f51b5;box-shadow:inset 0 0 0 1px rgba(0,0,0,0.12)"></div>
<div style="position:absolute;left:1426.7px;top:609.0px;width:14px;height:14px;border-radius:2px;background:#2196f3;box-shadow:inset 0 0 0 1px rgba(0,0,0,0.12)"></div>
<div style="position:absolute;left:1456.7px;top:609.0px;width:14px;height:14px;border-radius:2px;background:#03a9f4;box-shadow:inset 0 0 0 1px rgba(0,0,0,0.12)"></div>
<div style="position:absolute;left:1486.8px;top:609.0px;width:14px;height:14px;border-radius:2px;background:#00bcd4;box-shadow:inset 0 0 0 1px rgba(0,0,0,0.12)"></div>
<div style="position:absolute;left:1276.4px;top:639.1px;width:14px;height:14px;border-radius:2px;background:#009688;box-shadow:inset 0 0 0 1px rgba(0,0,0,0.12)"></div>
<div style="position:absolute;left:1306.5px;top:639.1px;width:14px;height:14px;border-radius:2px;background:#4caf50;box-shadow:inset 0 0 0 1px rgba(0,0,0,0.12)"></div>
<div style="position:absolute;left:1336.5px;top:639.1px;width:14px;height:14px;border-radius:2px;background:#8bc34a;box-shadow:inset 0 0 0 1px rgba(0,0,0,0.12)"></div>
<div style="position:absolute;left:1366.6px;top:639.1px;width:14px;height:14px;border-radius:2px;background:#cddc39;box-shadow:inset 0 0 0 1px rgba(0,0,0,0.12)"></div>
<div style="position:absolute;left:1396.6px;top:639.1px;width:14px;height:14px;border-radius:2px;background:#ffeb3b;box-shadow:inset 0 0 0 1px rgba(0,0,0,0.12)"></div>
<div style="position:absolute;left:1426.7px;top:639.1px;width:14px;height:14px;border-radius:2px;background:#ffc107;box-shadow:inset 0 0 0 1px rgba(0,0,0,0.12)"></div>
<div style="position:absolute;left:1456.7px;top:639.1px;width:14px;height:14px;border-radius:2px;background:#ff9800;box-shadow:inset 0 0 0 1px rgba(0,0,0,0.12)"></div>
<div style="position:absolute;left:1486.8px;top:639.1px;width:14px;height:14px;border-radius:2px;background:#ff5722;box-shadow:inset 0 0 0 1px rgba(0,0,0,0.12)"></div>
<div style="position:absolute;left:1276.4px;top:669.3px;width:14px;height:14px;border-radius:2px;background:#795548;box-shadow:inset 0 0 0 1px rgba(0,0,0,0.12)"></div>
<div style="position:absolute;left:1306.5px;top:669.3px;width:14px;height:14px;border-radius:2px;background:#9e9e9e;box-shadow:inset 0 0 0 1px rgba(0,0,0,0.12)"></div>
<div style="position:absolute;left:1336.5px;top:669.3px;width:14px;height:14px;border-radius:2px;background:#607d8b;box-shadow:inset 0 0 0 1px rgba(0,0,0,0.12)"></div>
<svg style="position:absolute;left:1519.7px;top:607px" width="12" height="18" viewBox="0 0 12 18"><path d="M2 7 L6 2.2 L10 7 Z M2 11 L6 15.8 L10 11 Z" fill="#333"/></svg>
<svg style="position:absolute;left:0;top:0" width="1595" height="706" viewBox="0 0 1595 706">
<path d="M1189.3 187 L1331 542 M1307.4 535.3 L1331 542 L1339.7 521.4" fill="none" stroke="#000" stroke-width="1.1"/>
</svg></body></html>
